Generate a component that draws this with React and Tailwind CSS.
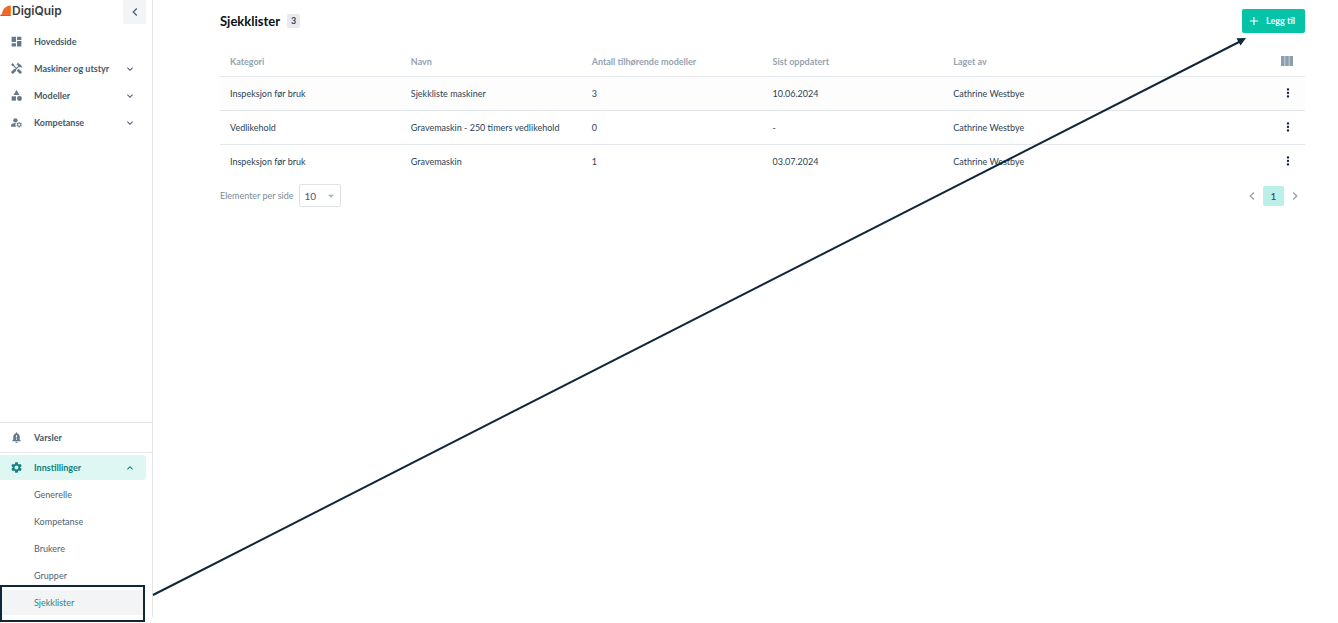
import React from "react";
import {
  MdDashboard,
  MdHandyman,
  MdCategory,
  MdManageAccounts,
  MdNotificationImportant,
  MdSettings,
  MdExpandMore,
  MdExpandLess,
  MdChevronLeft,
  MdChevronRight,
  MdMoreVert,
  MdAdd,
  MdArrowDropDown,
} from "react-icons/md";

const mainNav = [
  { label: "Hovedside", Icon: MdDashboard },
  { label: "Maskiner og utstyr", Icon: MdHandyman, expandable: true },
  { label: "Modeller", Icon: MdCategory, expandable: true },
  { label: "Kompetanse", Icon: MdManageAccounts, expandable: true },
];

const settingsNav = ["Generelle", "Kompetanse", "Brukere", "Grupper"];

const columns = ["Kategori", "Navn", "Antall tilhørende modeller", "Sist oppdatert", "Laget av"];

const rows = [
  ["Inspeksjon før bruk", "Sjekkliste maskiner", "3", "10.06.2024", "Cathrine Westbye"],
  ["Vedlikehold", "Gravemaskin - 250 timers vedlikehold", "0", "-", "Cathrine Westbye"],
  ["Inspeksjon før bruk", "Gravemaskin", "1", "03.07.2024", "Cathrine Westbye"],
];

function NavItem({ label, Icon, expandable }) {
  const inner = (
    <>
      <Icon className="mr-[11px] size-[13px] shrink-0 text-[#64798a]" />
      <span className="flex-1 text-left">{label}</span>
      {expandable && <MdExpandMore className="size-3 text-[#4b6375]" />}
    </>
  );
  const style = "flex h-[25px] w-full items-center px-2.5 font-bold text-[#435a6b]";
  return expandable ? (
    <button type="button" className={style}>{inner}</button>
  ) : (
    <a href="#" className={style}>{inner}</a>
  );
}

function Logo() {
  return (
    <a href="#" className="flex items-center" aria-label="DigiQuip">
      <svg viewBox="0 0 11 12" className="h-3 w-[11px]" aria-hidden="true">
        <path d="M10.8 0.6V9.2H2C2.4 4.4 5.8 0.6 10.8 0.6Z" fill="#f4641e" />
        <path d="M0 11 1 9.2H10.8V11Z" fill="#f04e12" />
        <path d="M6 2.6 6.600 6" stroke="#f98a50" strokeWidth="0.6" />
      </svg>
      <span className="ml-px font-['Inter',sans-serif] text-[12px] leading-4 font-semibold text-[#3d3d40]">DigiQuip</span>
    </a>
  );
}

function Sidebar() {
  return (
    <aside className="flex w-[153px] shrink-0 flex-col pb-1.5">
      <div className="flex flex-1 flex-col justify-between border-r border-[#e3e6ea]">
        <div>
          <div className="flex items-start justify-between pr-1.5">
            <div className="pt-[3px]"><Logo /></div>
            <button type="button" aria-label="Skjul meny" className="flex h-6 w-[23px] items-center justify-center rounded-b-[2px] bg-[#f2f4f6] text-[#4b6375]">
              <MdChevronLeft className="size-4" />
            </button>
          </div>
          <nav className="flex flex-col gap-0.5 pt-[5px] pr-1.5">
            {mainNav.map((item) => (
              <NavItem key={item.label} {...item} />
            ))}
          </nav>
        </div>
        <nav>
          <div className="border-y border-[#e3e6ea] py-0.5 pr-1.5">
            <NavItem label="Varsler" Icon={MdNotificationImportant} />
          </div>
          <div className="flex flex-col gap-0.5 py-0.5 pr-1.5">
            <button type="button" className="flex h-[25px] w-full items-center rounded-r-[3px] bg-[#def7f3] px-2.5 font-bold text-[#108080]">
              <MdSettings className="mr-[11px] size-[13px]" />
              <span className="flex-1 text-left">Innstillinger</span>
              <MdExpandLess className="size-3" />
            </button>
            {settingsNav.map((label) => (
              <a key={label} href="#" className="flex h-[25px] items-center pl-[34px] text-[#4b6375]">{label}</a>
            ))}
            <a href="#" aria-current="page" className="relative mr-0.5 flex h-[25px] items-center bg-[#f2f4f6] pl-[34px] text-[#23888a]">
              Sjekklister
              <span className="absolute -top-[5px] right-[-1px] -bottom-[7px] left-0 border-2 border-[#12263a]" />
            </a>
          </div>
        </nav>
      </div>
    </aside>
  );
}

function ColumnsIcon() {
  return (
    <svg viewBox="0 0 12 10" className="ml-auto h-2.5 w-3" aria-hidden="true">
      <path d="M0 0H12V10H0Z" fill="#b5c0ca" />
      <path d="M0 0H3V10H0ZM4.5 0H7.5V10H4.5ZM9 0H12V10H9Z" fill="#8c9dab" />
    </svg>
  );
}

export default function App() {
  return (
    <div className="relative flex min-h-screen overflow-hidden bg-white font-['Lato',sans-serif] text-[9px] leading-4">
      <Sidebar />
      <main className="min-w-0 flex-1 pt-[9px] pr-[33px] pl-[67px]">
        <header className="flex h-6 items-center justify-between">
          <div className="flex items-center gap-[7px]">
            <h1 className="text-[13px] font-bold text-[#0d1116]">Sjekklister</h1>
            <span className="flex h-3.5 w-[13px] items-center justify-center rounded-[2px] bg-[#e9eaf0] font-bold text-[#3c4354]">3</span>
          </div>
          <button type="button" className="flex h-6 items-center gap-[5px] rounded-[2px] bg-[#04c3a6] pr-2.5 pl-[5px] font-bold text-white">
            <MdAdd className="size-3.5" />
            Legg til
          </button>
        </header>
        <table className="mt-3.5 w-full table-fixed text-left">
          <thead>
            <tr className="h-[29px] border-b border-[#e3e6ea] text-[#94a3b0]">
              {columns.map((c) => (
                <th key={c} className="px-2.5 pt-0.5 font-bold">{c}</th>
              ))}
              <th className="pr-3">
                <button type="button" aria-label="Velg kolonner" className="ml-auto block"><ColumnsIcon /></button>
              </th>
            </tr>
          </thead>
          <tbody>
            {rows.map((r, i) => (
              <tr key={i} className="h-[34px] border-b border-[#e3e6ea] text-[#2c4254] first:bg-[#fdfdfe] last:border-0">
                {r.map((cell, j) => (
                  <td key={j} className="px-2.5 pt-0.5 whitespace-nowrap">{cell}</td>
                ))}
                <td className="pr-2.5">
                  <button type="button" aria-label="Flere valg" className="ml-auto block text-[#12263a]">
                    <MdMoreVert className="size-3.5" />
                  </button>
                </td>
              </tr>
            ))}
          </tbody>
        </table>
        <footer className="flex items-center justify-between pt-1.5">
          <div className="flex items-center gap-[5px] text-[#7b8b99]">
            <label htmlFor="page-size">Elementer per side</label>
            <div className="grid items-center">
              <select id="page-size" className="col-start-1 row-start-1 h-[23px] w-[42px] appearance-none rounded-[2px] border border-[#dfe3e7] bg-white pl-[5px] text-[10px] text-[#435a6b]">
                <option>10</option>
                <option>25</option>
                <option>50</option>
              </select>
              <MdArrowDropDown className="pointer-events-none col-start-1 row-start-1 mr-[3px] size-3.5 justify-self-end text-[#a5b1bb]" />
            </div>
          </div>
          <div className="flex items-center gap-[3px] pr-0.5 text-[#94a3b0]">
            <button type="button" aria-label="Forrige side"><MdChevronLeft className="size-4" /></button>
            <button type="button" className="h-5 w-[21px] rounded-[2px] bg-[#bcefe8] text-[10px] text-[#2c4254]">1</button>
            <button type="button" aria-label="Neste side"><MdChevronRight className="size-4" /></button>
          </div>
        </footer>
      </main>
      <svg viewBox="0 0 1338 623" className="pointer-events-none absolute top-0 left-0 w-full" aria-hidden="true">
        <path d="M153 595 1240 41.500" stroke="#12263a" strokeWidth="2" fill="none" />
        <path d="M1246 38 1236.500 38.200 1240.500 45.500Z" fill="#12263a" />
      </svg>
    </div>
  );
}
